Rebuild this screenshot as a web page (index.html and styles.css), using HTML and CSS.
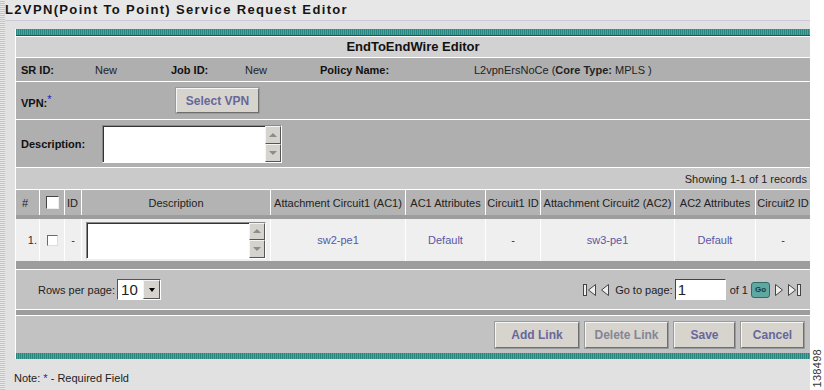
FILE: index.html
```html
<!DOCTYPE html>
<html lang="en">
<head>
  <meta charset="UTF-8">
  <title>L2VPN Service Request Editor</title>
  <link rel="stylesheet" href="styles.css">
</head>
<body>
<div class="page">
  <div class="strip"></div>

  <div class="main">
    <!-- Page Title -->
    <div class="title-bar">
      <h1>L2VPN(Point To Point) Service Request Editor</h1>
    </div>

    <!-- Editor -->
    <div class="editor">
      <div class="teal teal-top"></div>
      <div class="editor-title">EndToEndWire Editor</div>

      <div class="row info-row">
        <span class="lbl c1">SR ID:</span>
        <span class="c2">New</span>
        <span class="lbl c3">Job ID:</span>
        <span class="c4">New</span>
        <span class="lbl c5">Policy Name:</span>
        <span>L2vpnErsNoCe (<b>Core Type:</b> MPLS )</span>
      </div>

      <div class="row vpn-row">
        <span class="lbl vpn-lbl">VPN:<sup class="req">*</sup></span>
        <button class="btn btn-vpn">Select VPN</button>
      </div>

      <div class="row desc-row">
        <span class="lbl desc-lbl">Description:</span>
        <div class="spinbox">
          <div class="spin-text"></div>
          <div class="spin-bar">
            <span class="spin-btn"><i class="tri-up"></i></span>
            <span class="spin-btn"><i class="tri-down"></i></span>
          </div>
        </div>
      </div>

      <div class="row showing">Showing 1-1 of 1 records</div>

      <div class="grid grid-head">
        <div class="cell left hash">#</div>
        <div class="cell"><span class="check check-lg"></span></div>
        <div class="cell left">ID</div>
        <div class="cell">Description</div>
        <div class="cell">Attachment Circuit1 (AC1)</div>
        <div class="cell">AC1 Attributes</div>
        <div class="cell">Circuit1 ID</div>
        <div class="cell">Attachment Circuit2 (AC2)</div>
        <div class="cell">AC2 Attributes</div>
        <div class="cell">Circuit2 ID</div>
      </div>
      <div class="dark dark-thin"></div>

      <div class="grid grid-data">
        <div class="cell right">1.</div>
        <div class="cell"><span class="check"></span></div>
        <div class="cell">-</div>
        <div class="cell">
          <div class="spinbox spinbox-sm">
            <div class="spin-text"></div>
            <div class="spin-bar">
              <span class="spin-btn"><i class="tri-up"></i></span>
              <span class="spin-btn"><i class="tri-down"></i></span>
            </div>
          </div>
        </div>
        <div class="cell link">sw2-pe1</div>
        <div class="cell link">Default</div>
        <div class="cell">-</div>
        <div class="cell link">sw3-pe1</div>
        <div class="cell link">Default</div>
        <div class="cell">-</div>
      </div>
      <div class="dark dark-thick"></div>

      <div class="row pager">
        <div class="rows-per">
          Rows per page:
          <div class="select">
            <span class="select-val">10</span>
            <span class="select-btn"><i class="tri-black"></i></span>
          </div>
        </div>
        <div class="nav">
          <svg class="nav-ico" width="14" height="14" viewBox="0 0 14 14">
            <rect x="0.5" y="1.5" width="3" height="11" fill="#eee" stroke="#444"/>
            <polygon points="12.5,1.5 5.5,7 12.5,12.5" fill="#eee" stroke="#444"/>
          </svg>
          <svg class="nav-ico" width="9" height="14" viewBox="0 0 9 14">
            <polygon points="7.5,1.5 0.5,7 7.5,12.5" fill="#eee" stroke="#444"/>
          </svg>
          <span class="goto">Go to page:</span>
          <span class="page-input">1</span>
          <span class="of">of 1</span>
          <span class="go">Go</span>
          <svg class="nav-ico" width="10" height="14" viewBox="0 0 10 14">
            <polygon points="1.5,1.5 8.5,7 1.5,12.5" fill="#eee" stroke="#444"/>
          </svg>
          <svg class="nav-ico" width="14" height="14" viewBox="0 0 14 14">
            <polygon points="1.5,1.5 8.5,7 1.5,12.5" fill="#eee" stroke="#444"/>
            <rect x="10.5" y="1.5" width="3" height="11" fill="#eee" stroke="#444"/>
          </svg>
        </div>
      </div>
      <div class="dark dark-mid"></div>

      <div class="row actions">
        <button class="btn btn-add">Add Link</button>
        <button class="btn btn-del">Delete Link</button>
        <button class="btn btn-save">Save</button>
        <button class="btn btn-cancel">Cancel</button>
      </div>
      <div class="teal"></div>
    </div>

    <p class="note">Note: <span class="req">*</span> - Required Field</p>
  </div>

  <div class="side"><span class="fig">138498</span></div>
</div>
</body>
</html>
```

FILE: styles.css
```css
body {
  margin: 0;
  font-family: "Liberation Sans", Arial, sans-serif;
  font-size: 11px;
  color: #222;
  background: #fff;
}
.page {
  display: flex;
  width: 824px;
  height: 390px;
  overflow: hidden;
}
.strip {
  width: 5px;
  background: repeating-linear-gradient(0deg, #c4c4c4 0 1px, #e8e8e8 1px 2px);
}
.main {
  width: 805px;
  background: #e1e1e1;
}
.side {
  width: 14px;
  background: #fff;
  display: flex;
  align-items: flex-end;
  justify-content: center;
  padding-bottom: 2px;
  box-sizing: border-box;
}
.fig {
  writing-mode: vertical-rl;
  transform: rotate(180deg);
  font-size: 11px;
  color: #333;
  letter-spacing: 0.3px;
}

/* title */
.title-bar {
  height: 20px;
  background: #e7e7e7;
  border-bottom: 1px solid #cfc8d8;
}
h1 {
  margin: 0;
  font-size: 13px;
  line-height: 20px;
  letter-spacing: 1.35px;
  color: #151515;
}

/* editor frame */
.editor {
  margin: 8px 0 0 10px;
  border-left: 1px solid #fff;
}
.teal {
  height: 6px;
  background: repeating-linear-gradient(90deg, #2b8680 0 1px, #4fa59e 1px 2px);
}
.teal-top {
  border-bottom: 1px solid #3c4a48;
}
.editor-title {
  height: 20px;
  border-top: 1px solid #fff;
  border-bottom: 1px solid #fff;
  background: #d2d2d2;
  text-align: center;
  font-weight: bold;
  font-size: 13px;
  line-height: 20px;
  color: #111;
}
.row {
  display: flex;
  align-items: center;
  border-bottom: 1px solid #fff;
  padding-left: 5px;
}
.lbl {
  font-weight: bold;
  color: #111;
}
.info-row {
  height: 23px;
  background: #afafaf;
}
.c1 { width: 74px; }
.c2 { width: 76px; }
.c3 { width: 74px; }
.c4 { width: 75px; }
.c5 { width: 154px; }
.vpn-row {
  height: 37px;
  background: #afafaf;
}
.vpn-lbl {
  width: 155px;
}
.req {
  color: #1c1cc0;
  font-weight: normal;
}
sup.req {
  font-size: 11px;
  vertical-align: 4px;
}
.desc-row {
  height: 47px;
  background: #afafaf;
}
.desc-lbl {
  width: 81px;
}
.showing {
  height: 21px;
  background: #cacaca;
  justify-content: flex-end;
  padding-right: 3px;
}

/* spin textarea */
.spinbox {
  display: flex;
  width: 180px;
  height: 38px;
  box-sizing: border-box;
  border: 1px solid;
  border-color: #8a8a8a #fff #fff #8a8a8a;
  background: #fff;
}
.spinbox-sm {
  height: 37px;
}
.spin-text {
  flex: 1;
  border-top: 1px solid #333;
  border-left: 1px solid #333;
}
.spin-bar {
  width: 16px;
  display: flex;
  flex-direction: column;
  background: #d4d0c8;
}
.spin-btn {
  flex: 1;
  display: flex;
  align-items: center;
  justify-content: center;
  background: #d6d3ce;
  border: 1px solid;
  border-color: #f4f4f4 #555 #555 #f4f4f4;
}
.tri-up, .tri-down, .tri-black {
  width: 0;
  height: 0;
  border-left: 4px solid transparent;
  border-right: 4px solid transparent;
}
.tri-up {
  border-bottom: 4px solid #8c8c8c;
}
.tri-down {
  border-top: 4px solid #8c8c8c;
}
.tri-black {
  border-left-width: 3px;
  border-right-width: 3px;
  border-top: 4px solid #000;
}

/* list grid */
.grid {
  display: grid;
  grid-template-columns: 23px 24px 16px 188px 134px 79px 54px 133px 80px 54px;
  column-gap: 1px;
  background: #fff;
}
.cell {
  display: flex;
  align-items: center;
  justify-content: center;
  white-space: nowrap;
}
.cell.left {
  justify-content: flex-start;
  padding-left: 2px;
}
.cell.hash {
  padding-left: 6px;
}
.cell.right {
  justify-content: flex-end;
  padding-right: 2px;
}
.grid-head {
  height: 25px;
}
.grid-head .cell {
  background: #b3b3b3;
}
.grid-data {
  height: 42px;
}
.grid-data .cell {
  background: #efefef;
  color: #333;
}
.cell.link {
  color: #5757a6;
}
.check {
  width: 9px;
  height: 9px;
  background: #fff;
  border: 1px solid;
  border-color: #6a6a6a #ddd #ddd #6a6a6a;
}
.check-lg {
  width: 11px;
  height: 11px;
  border-color: #444 #eee #eee #444;
}
.dark {
  background: #9d9d9d;
}
.dark-thin {
  height: 4px;
}
.dark-thick {
  height: 8px;
  border-bottom: 1px solid #fff;
}
.dark-mid {
  height: 5px;
  border-bottom: 1px solid #fff;
}

/* pager */
.pager {
  height: 39px;
  background: #c2c2c2;
  justify-content: space-between;
  padding-left: 22px;
  padding-right: 6px;
  color: #222;
}
.rows-per {
  display: flex;
  align-items: center;
  gap: 2px;
}
.select {
  display: flex;
  height: 21px;
  box-sizing: border-box;
  border: 1px solid;
  border-color: #555 #fff #fff #555;
  background: #fff;
}
.select-val {
  width: 22px;
  font-size: 15px;
  line-height: 19px;
  padding-left: 3px;
}
.select-btn {
  width: 15px;
  display: flex;
  align-items: center;
  justify-content: center;
  background: #d6d3ce;
  border: 1px solid;
  border-color: #f4f4f4 #555 #555 #f4f4f4;
}
.nav {
  display: flex;
  align-items: center;
}
.nav-ico {
  margin-right: 3px;
}
.nav-ico:first-child {
  margin-right: 4px;
}
.goto {
  margin-left: 2px;
}
.page-input {
  width: 51px;
  height: 21px;
  box-sizing: border-box;
  margin-left: 2px;
  padding-left: 2px;
  background: #fff;
  border: 1px solid;
  border-color: #444 #fff #fff #444;
  font-size: 15px;
  line-height: 19px;
}
.of {
  margin-left: 4px;
}
.go {
  margin: 0 4px 0 3px;
  width: 19px;
  height: 16px;
  box-sizing: border-box;
  border: 1px solid #2f6c68;
  border-radius: 3px;
  background: #5fa7a1;
  color: #173b39;
  font-size: 8px;
  font-weight: bold;
  text-align: center;
  line-height: 14px;
}

/* buttons */
.btn {
  height: 26px;
  padding: 0;
  background: #d7d4ce;
  border: 1px solid;
  border-color: #f6f6f6 #6e6e6e #6e6e6e #f6f6f6;
  box-shadow: 0 0 0 1px #9a9a9a;
  font-family: "Liberation Sans", Arial, sans-serif;
  font-weight: bold;
  font-size: 12px;
  color: #67679a;
}
.btn-vpn {
  width: 83px;
  height: 25px;
}
.actions {
  height: 37px;
  background: #c2c2c2;
  justify-content: flex-end;
  padding-right: 6px;
  border-bottom: none;
}
.actions .btn {
  margin-left: 6px;
}
.btn-add { width: 84px; }
.btn-del { width: 83px; color: #858594; }
.btn-save { width: 61px; margin-left: 7px; }
.btn-cancel { width: 63px; margin-left: 7px; }

.note {
  margin: 13px 0 0 9px;
  color: #222;
}
```
